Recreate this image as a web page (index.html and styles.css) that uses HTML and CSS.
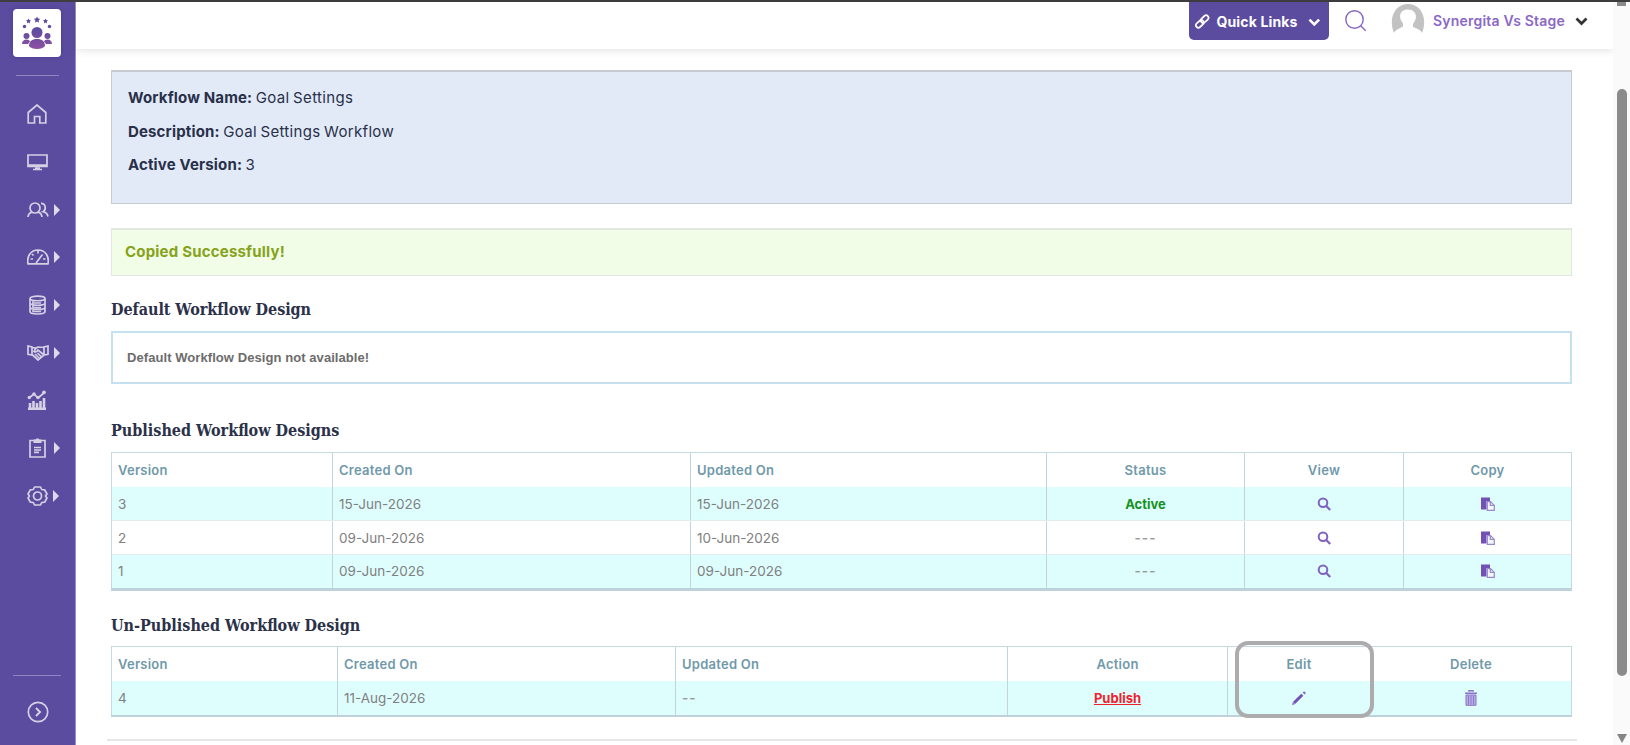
FILE: index.html
```html
<!DOCTYPE html>
<html lang="en">
<head>
<meta charset="utf-8">
<title>Workflow Designs</title>
<link rel="stylesheet" href="styles.css">
</head>
<body>
<svg width="0" height="0" class="defs">
  <defs>
    <linearGradient id="brand" x1="0" y1="0" x2="0" y2="34" gradientUnits="userSpaceOnUse"><stop offset=".35" stop-color="#5b4c9f"/><stop offset="1" stop-color="#8f4fa3"/></linearGradient>
    <symbol id="find" viewBox="0 0 14 14"><circle cx="6" cy="5.800" r="4.300" fill="none" stroke="#8160c0" stroke-width="2"/><path d="M9.200 9l4 4" stroke="#8160c0" stroke-width="2.200"/></symbol>
    <symbol id="paste" viewBox="0 0 14 14"><path d="M0 .5h9V4H5.500v8.500H0z" fill="#7350b5"/><path d="M6.300 4.600h3.200l3.800 3.800v5h-7z" fill="#f3f8fd" stroke="#9a86cb" stroke-width="1.200"/><path d="M9.300 4.600v3.800h4" fill="none" stroke="#9a86cb" stroke-width="1.200"/></symbol>
    <symbol id="caret" viewBox="0 0 6 12"><path d="M0 0l6 6-6 6z" fill="#dedbe9"/></symbol>
  </defs>
</svg>
<div class="topline"></div>
<div class="app">
  <nav class="sidebar">
    <div class="logo">
      <svg width="30" height="34" viewBox="0 0 30 34" fill="url(#brand)">
        <path d="M15 .5l1 2 2.200.3-1.600 1.600.4 2.300-2-1.100-2 1.100.4-2.300-1.600-1.600 2.200-.3z"/>
        <path d="M6.500 2.500l.8 1.600 1.700.2-1.200 1.300.3 1.800-1.600-.9-1.600.9.300-1.800L4 4.300l1.700-.2zM23.500 2.500l.8 1.600 1.700.2-1.200 1.300.3 1.800-1.600-.9-1.600.9.300-1.800L21 4.300l1.700-.2z"/>
        <circle cx="2.500" cy="10.500" r="1.700"/><circle cx="27.500" cy="10.500" r="1.700"/>
        <circle cx="15" cy="16.500" r="5.500"/><circle cx="4.500" cy="20" r="3"/><circle cx="25.500" cy="20" r="3"/>
        <path d="M0 28c0-3 2-4.500 4.500-4.500 2 0 3 .8 3.500 2L6 28zM30 28c0-3-2-4.500-4.500-4.500-2 0-3 .8-3.500 2l2 2.500z"/>
        <path d="M7 30c0-4.500 3-7 8-7s8 2.500 8 7c-2.500 4-13.500 4-16 0z"/>
      </svg>
    </div>
    <div class="rule rule-top"></div>
    <a class="item home"><svg width="20" height="20" viewBox="0 0 20 20"><path d="M1.200 8.500L10 1l8.800 7.500V19h-6v-6.500H7.500V19H1.200z"/></svg></a>
    <a class="item"><svg width="21" height="17" viewBox="0 0 21 17"><path d="M1 1h19v11.500H1zM1 11h19"/><path d="M6 15.500h9M8 14h5"/></svg></a>
    <a class="item has-sub"><svg width="22" height="16" viewBox="0 0 22 16"><circle cx="8" cy="6" r="5"/><path d="M1 15c.4-3 2-4.500 4.200-4.800M10.800 10.200c2.200.4 3.800 1.800 4.200 4.800M14 1.300c5 0 5.500 6.700 2 8.400 2.800.5 4.300 2 5 4.800"/></svg><svg class="caret"><use href="#caret"/></svg></a>
    <a class="item has-sub"><svg width="22" height="16" viewBox="0 0 22 16"><path d="M1 14.800C-.5 7 4 1 11 1s11.500 6 10 13.800zM9 14l6.500-8.500M11 1v3.500M3.500 10H6M16 10h2.500M5 5l1.500 1.500"/></svg><svg class="caret"><use href="#caret"/></svg></a>
    <a class="item has-sub"><svg width="17" height="20" viewBox="0 0 17 20"><path d="M1 3.500v13c0 3.300 15 3.300 15 0v-13C16 .3 1 .3 1 3.500c0 3 15 3 15 0M1 8c1 3 15 3 15 0M1 12.200c1 3 15 3 15 0M4 6.200v11M5 8h7M5 12.500h7M5 16.500h7"/></svg><svg class="caret"><use href="#caret"/></svg></a>
    <a class="item has-sub"><svg width="22" height="16" viewBox="0 0 22 16"><path d="M1 1l4 1v8l-4-.7zM21 1l-4 1v8l4-.7zM5 2.500l4 .5 2-1 6 .5M9 3L7 6.500c1.500 1 3 .3 4-1.500l6 5M5 9.500L11 15l6-5M8 9l4.500 4.500M10.500 8l4 4"/></svg><svg class="caret"><use href="#caret"/></svg></a>
    <a class="item"><svg class="chart" width="20" height="20" viewBox="0 0 20 20"><path d="M1 18.800h18M3 18v-5M6.500 18v-7M10 18v-5M13.500 18v-7M17 18V8" stroke-width="2.600"/><path d="M2 8l5-4 4 4 6.500-5.500"/><g fill="#d5d0e4" stroke="none"><circle cx="2.300" cy="7.500" r="1.700"/><circle cx="7" cy="4" r="1.700"/><circle cx="11" cy="7.500" r="1.700"/><circle cx="17" cy="2.300" r="1.900"/></g></svg></a>
    <a class="item has-sub"><svg width="17" height="20" viewBox="0 0 17 20"><path d="M1 2.500h15V19H1zM5 9.500h7M5 12h7M5 14.300h5"/><path d="M4.500 1.500h2L7.500.5h2l1 1h2V5h-8z" fill="#d5d0e4" stroke="none"/></svg><svg class="caret"><use href="#caret"/></svg></a>
    <a class="item has-sub"><svg width="21" height="20" viewBox="0 0 21 20"><circle cx="10.500" cy="10" r="4"/><path d="M7.500 1h6l1.200 2.500 3 .3L20 8l-1.500 2 1.500 2-2.300 4.200-3 .3L13.500 19h-6l-1.200-2.500-3-.3L1 12l1.500-2L1 8l2.300-4.200 3-.3z" stroke-linejoin="round"/></svg><svg class="caret"><use href="#caret"/></svg></a>
    <div class="rule rule-bottom"></div>
    <a class="expand"><svg width="22" height="22" viewBox="0 0 22 22"><circle cx="11" cy="11" r="9.700"/><path d="M9 7l4 4-4 4" stroke-width="2"/></svg></a>
  </nav>
  <div class="page">
    <header class="header">
      <button class="quick">
        <svg width="17" height="17" viewBox="0 0 17 17" fill="none" stroke="#fff" stroke-width="1.800"><rect x="-4.500" y="-2.500" width="9" height="5" rx="2.500" transform="translate(11 6) rotate(-43)"/><rect x="-4.500" y="-2.500" width="9" height="5" rx="2.500" transform="translate(6 11) rotate(-43)"/></svg>
        <span>Quick Links</span>
        <svg class="chev" width="13" height="9" viewBox="0 0 13 9"><path d="M1.500 1.500l5 5 5-5" fill="none" stroke="#fff" stroke-width="2.700"/></svg>
      </button>
      <svg class="search" width="22" height="22" viewBox="0 0 22 22" fill="none" stroke="#8765c3" stroke-width="1.400"><circle cx="9.500" cy="9.500" r="8.700"/><path d="M15.700 15.700l5 5"/></svg>
      <svg class="avatar" width="34" height="29" viewBox="0 0 34 29"><path d="M3 29C-3 14 4 0 17 0s20 14 14 29c-1-3-5-4.500-9-6v-3c6-8 2-14.500-5-14.500S6 11.500 12 19.500v3C8 24.500 4 26 3 29z" fill="#c2c2c2"/></svg>
      <span class="user">Synergita Vs Stage</span>
      <svg class="chev" width="13" height="9" viewBox="0 0 13 9"><path d="M1.500 1.500l5 5 5-5" fill="none" stroke="#333" stroke-width="2.700"/></svg>
    </header>
    <main class="content">
      <section class="info">
        <p><b>Workflow Name:</b> <span>Goal Settings</span></p>
        <p><b>Description:</b> <span>Goal Settings Workflow</span></p>
        <p><b>Active Version:</b> <span>3</span></p>
      </section>
      <div class="alert">Copied Successfully!</div>
      <h2 class="h-default">Default Workflow Design</h2>
      <div class="empty">Default Workflow Design not available!</div>
      <h2 class="h-published">Published Workflow Designs</h2>
      <div class="table published">
        <div class="row head"><div>Version</div><div>Created On</div><div>Updated On</div><div>Status</div><div>View</div><div>Copy</div></div>
        <div class="row tint"><div>3</div><div>15-Jun-2026</div><div>15-Jun-2026</div><div class="active">Active</div><div><svg class="ic"><use href="#find"/></svg></div><div><svg class="ic"><use href="#paste"/></svg></div></div>
        <div class="row"><div>2</div><div>09-Jun-2026</div><div>10-Jun-2026</div><div class="dash">---</div><div><svg class="ic"><use href="#find"/></svg></div><div><svg class="ic"><use href="#paste"/></svg></div></div>
        <div class="row tint"><div>1</div><div>09-Jun-2026</div><div>09-Jun-2026</div><div class="dash">---</div><div><svg class="ic"><use href="#find"/></svg></div><div><svg class="ic"><use href="#paste"/></svg></div></div>
      </div>
      <h2 class="h-unpublished">Un-Published Workflow Design</h2>
      <div class="table unpublished">
        <div class="row head"><div>Version</div><div>Created On</div><div>Updated On</div><div>Action</div><div>Edit</div><div>Delete</div></div>
        <div class="row tint"><div>4</div><div>11-Aug-2026</div><div class="dash">--</div><div><a class="publish">Publish</a></div>
          <div><svg class="ic" viewBox="0 0 14 14"><path d="M2 12l8.300-8.300" stroke="#7350b5" stroke-width="3"/><path d="M0 14l.8-3 2.200 2.200zM10.600 1.600L12.200.2 14 2l-1.500 1.500z" fill="#8a6cc5"/></svg></div>
          <div><svg class="ic trash" viewBox="0 0 12 16"><path d="M4 1.800V.7h4v1.100M0 3.300h12" fill="none" stroke="#8a72c6" stroke-width="1.500"/><path d="M1 5h10v10.300H1z" fill="#b5aee2" stroke="#8a72c6"/><path d="M3.500 6v8.500M6 6v8.500M8.500 6v8.500" stroke="#8f78ca"/></svg></div>
        </div>
        <div class="highlight"></div>
      </div>
      <hr class="divider">
    </main>
  </div>
  <div class="scroll"><div class="up"></div><div class="thumb"></div><div class="down"></div></div>
</div>
</body>
</html>
```
FILE: styles.css
```css
* { box-sizing: border-box; }
body { margin: 0; height: 745px; overflow: hidden; background: #fff; font-family: Inter, "Liberation Sans", sans-serif; color: #28304a; }
.defs { display: block; height: 0; }
.topline { height: 2px; background: #3e3d40; }
.app { display: flex; height: 743px; }

.sidebar { width: 76px; flex: none; background: #5b4c9f; border-right: 1px solid #9a90c6; padding-top: 7px; display: flex; flex-direction: column; align-items: flex-start; }
.logo { width: 48px; height: 48px; margin-left: 13px; background: #fff; border-radius: 4px; display: flex; align-items: center; justify-content: center; box-shadow: 0 0 4px #4a3c8c; }
.rule { height: 1px; background: #8f84bf; }
.rule-top { width: 43px; margin: 18px 0 14.500px 16px; }
.rule-bottom { width: 48px; margin: 155.500px 0 25px 13px; }
.item { height: 47.700px; width: 75px; padding-left: 27px; display: flex; align-items: center; flex: none; }
.item svg:first-child, .expand svg { fill: none; stroke: #d5d0e4; stroke-width: 1.700; flex: none; }
.item svg[width="17"] { margin-left: 2px; margin-right: 3px; }
.item .caret { width: 6px; height: 12px; margin-left: 5px; }
.expand { margin-left: 27px; display: block; height: 22px; }

.page { flex: 1; min-width: 0; }
.header { height: 47px; display: flex; align-items: flex-start; padding-left: 1113px; background: #fff; box-shadow: 0 2px 8px #0000001a; }
.quick { width: 140px; height: 38px; border: 0; border-radius: 0 0 5px 5px; background: #5b4c9f; color: #fff; padding: 0 8px 0 5px; display: flex; align-items: center; font: 700 14px Inter, sans-serif; flex: none; }
.quick span { width: 81px; margin-left: 6px; text-align: left; white-space: nowrap; letter-spacing: .15px; }
.quick .chev { margin: 2px 0 0 11px; }
.search { margin: 8px 0 0 16px; flex: none; }
.avatar { margin: 2px 0 0 24px; flex: none; }
.user { margin: 10px 0 0 8px; width: 132px; flex: none; font-size: 14px; line-height: 18px; font-weight: 600; letter-spacing: .2px; color: #8b68c6; white-space: nowrap; }
.header > .chev { margin: 15px 0 0 10px; flex: none; }

.content { padding: 21px 36px 0 31px; }
.content > * { margin-left: 4px; margin-right: 5px; }
.info { height: 134px; border: 1px solid #c6cad1; border-top-width: 2px; background: #e3eaf7; padding: 9px 16px; font-size: 15px; }
.info p { margin: 0; height: 33.500px; line-height: 33px; letter-spacing: .33px; word-spacing: -1px; }
.info b { font-weight: 700; letter-spacing: .15px; word-spacing: 0; }
.alert { margin-top: 24px; height: 48px; border: 1px solid #e2e7df; border-top-width: 2px; background: #f2fde8; color: #86a31a; font-size: 15px; font-weight: 700; line-height: 44px; padding-left: 13px; letter-spacing: .2px; }
h2 { font-family: "DejaVu Serif", serif; font-stretch: condensed; font-weight: 700; font-size: 16px; line-height: 26px; height: 24px; margin: 0; color: #2b3149; white-space: nowrap; }
.h-default { margin-top: 21px; letter-spacing: -.05px; }
.empty { margin-top: 10px; height: 53px; border: 2px solid #c5e1ef; font: 700 13px/49px "Liberation Sans", sans-serif; color: #6c6c6c; padding-left: 14px; letter-spacing: .07px; }
.h-published { margin-top: 34px; }
.table { border: 1px solid #c6d9df; border-bottom: 3px solid #bdd2da; font-size: 13.500px; }
.published { margin-top: 10px; height: 139px; }
.row { display: grid; height: 33.700px; color: #808080; }
.published .row { grid-template-columns: 221px 358px 356px 198px 159px 1fr; }
.unpublished .row { grid-template-columns: 226px 338px 332px 220px 143px 1fr; height: 34px; }
.row > div { display: flex; align-items: center; padding-left: 6px; border-right: 1px solid #c3d5dc; }
.row > div:last-child { border-right: 0; }
.row > div:nth-child(n+4) { justify-content: center; padding: 0; }
.row + .row { border-top: 1px solid #e3ecec; }
.row.head { color: #7099aa; font-weight: 600; font-size: 13px; letter-spacing: .25px; }
.row.tint { background: #defefe; }
.row.head + .tint { border-top: 0; }
.ic { width: 14px; height: 14px; }
.trash { width: 12px; height: 16px; }
.row .active { color: #18901f; font-weight: 700; font-size: 13px; }
.row .dash { letter-spacing: 1px; font-weight: 600; color: #999; }
.h-unpublished { margin-top: 22px; }
.unpublished { position: relative; margin-top: 9px; height: 71px; }
.unpublished .row > div:nth-child(5) { border-right-color: transparent; }
.publish { color: #f0222c; font-weight: 700; font-size: 13px; text-decoration: underline; }
.highlight { position: absolute; left: 1123px; top: -6px; width: 139px; height: 77px; border: 4px solid #acacac; border-radius: 13px; }
.divider { height: 2px; border: 0; background: #e6e6e6; margin: 22px 0 0; }

.scroll { width: 17px; background: #fafafa; display: flex; flex-direction: column; padding-left: 4px; }
.up { width: 9px; height: 4px; background: #8a8a8a; }
.thumb { width: 10px; height: 587px; margin-top: 83px; border-radius: 5px; background: #8b8b8b; }
.down { margin-top: 58px; border: 5px solid transparent; border-top: 9px solid #858585; border-bottom: 0; width: 0; }
```
